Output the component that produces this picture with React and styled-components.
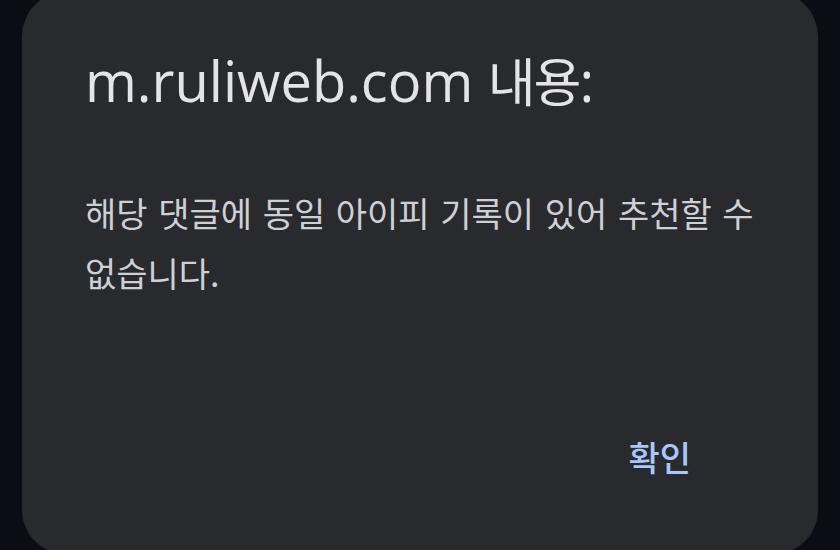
import React from "react";
import styled, { createGlobalStyle } from "styled-components";

const GlobalStyle = createGlobalStyle`
  html, body {
    margin: 0;
    padding: 0;
    background: #0a0e14;
  }
`;

const Screen = styled("div")`
  width: 840px;
  height: 550px;
  overflow: hidden;
  background: #0a0e14;
  padding: 0 22px;
  box-sizing: border-box;
`;

const Dialog = styled("div")`
  margin-top: -8px;
  height: 562px;
  box-sizing: border-box;
  background: #292a2e;
  border-radius: 44px;
  padding: 56px 63px 0 63px;
  display: flex;
  flex-direction: column;
`;

const Title = styled("h1")`
  margin: 0;
  font-family: "Open Sans", "Noto Sans CJK KR", sans-serif;
  font-weight: 400;
  font-size: 56px;
  line-height: 64px;
  color: #e4e4e6;
  white-space: nowrap;
`;

const Hangul = styled("span")`
  font-family: "Noto Sans CJK KR", sans-serif;
  font-size: ${(p) => p.size}px;
  letter-spacing: ${(p) => p.spacing}px;
`;

const Message = styled("p")`
  margin: 71px 0 0 0;
  font-family: "Noto Sans CJK KR", sans-serif;
  font-weight: 400;
  font-size: 34px;
  line-height: 60px;
  word-spacing: 3px;
  word-break: keep-all;
  color: #cfd0d3;
  width: 690px;
`;

const Actions = styled("div")`
  margin-top: 123px;
  display: flex;
  justify-content: flex-end;
  padding-right: 40px;
`;

const TextButton = styled("button")`
  border: none;
  background: none;
  padding: 0 24px;
  height: 60px;
  font-family: "Noto Sans CJK KR", sans-serif;
  font-weight: 500;
  font-size: 34px;
  color: #a8c7fa;
  cursor: pointer;
`;

const App = () => {
  return (
    <>
      <GlobalStyle />
      <Screen>
        <Dialog>
          <Title>
            m.ruliweb.com{" "}
            <Hangul size={52} spacing={-2}>
              내용
            </Hangul>
            :
          </Title>
          <Message>
            해당 댓글에 동일 아이피 기록이 있어 추천할 수 없습니다.
          </Message>
          <Actions>
            <TextButton>확인</TextButton>
          </Actions>
        </Dialog>
      </Screen>
    </>
  );
};

export default App;
